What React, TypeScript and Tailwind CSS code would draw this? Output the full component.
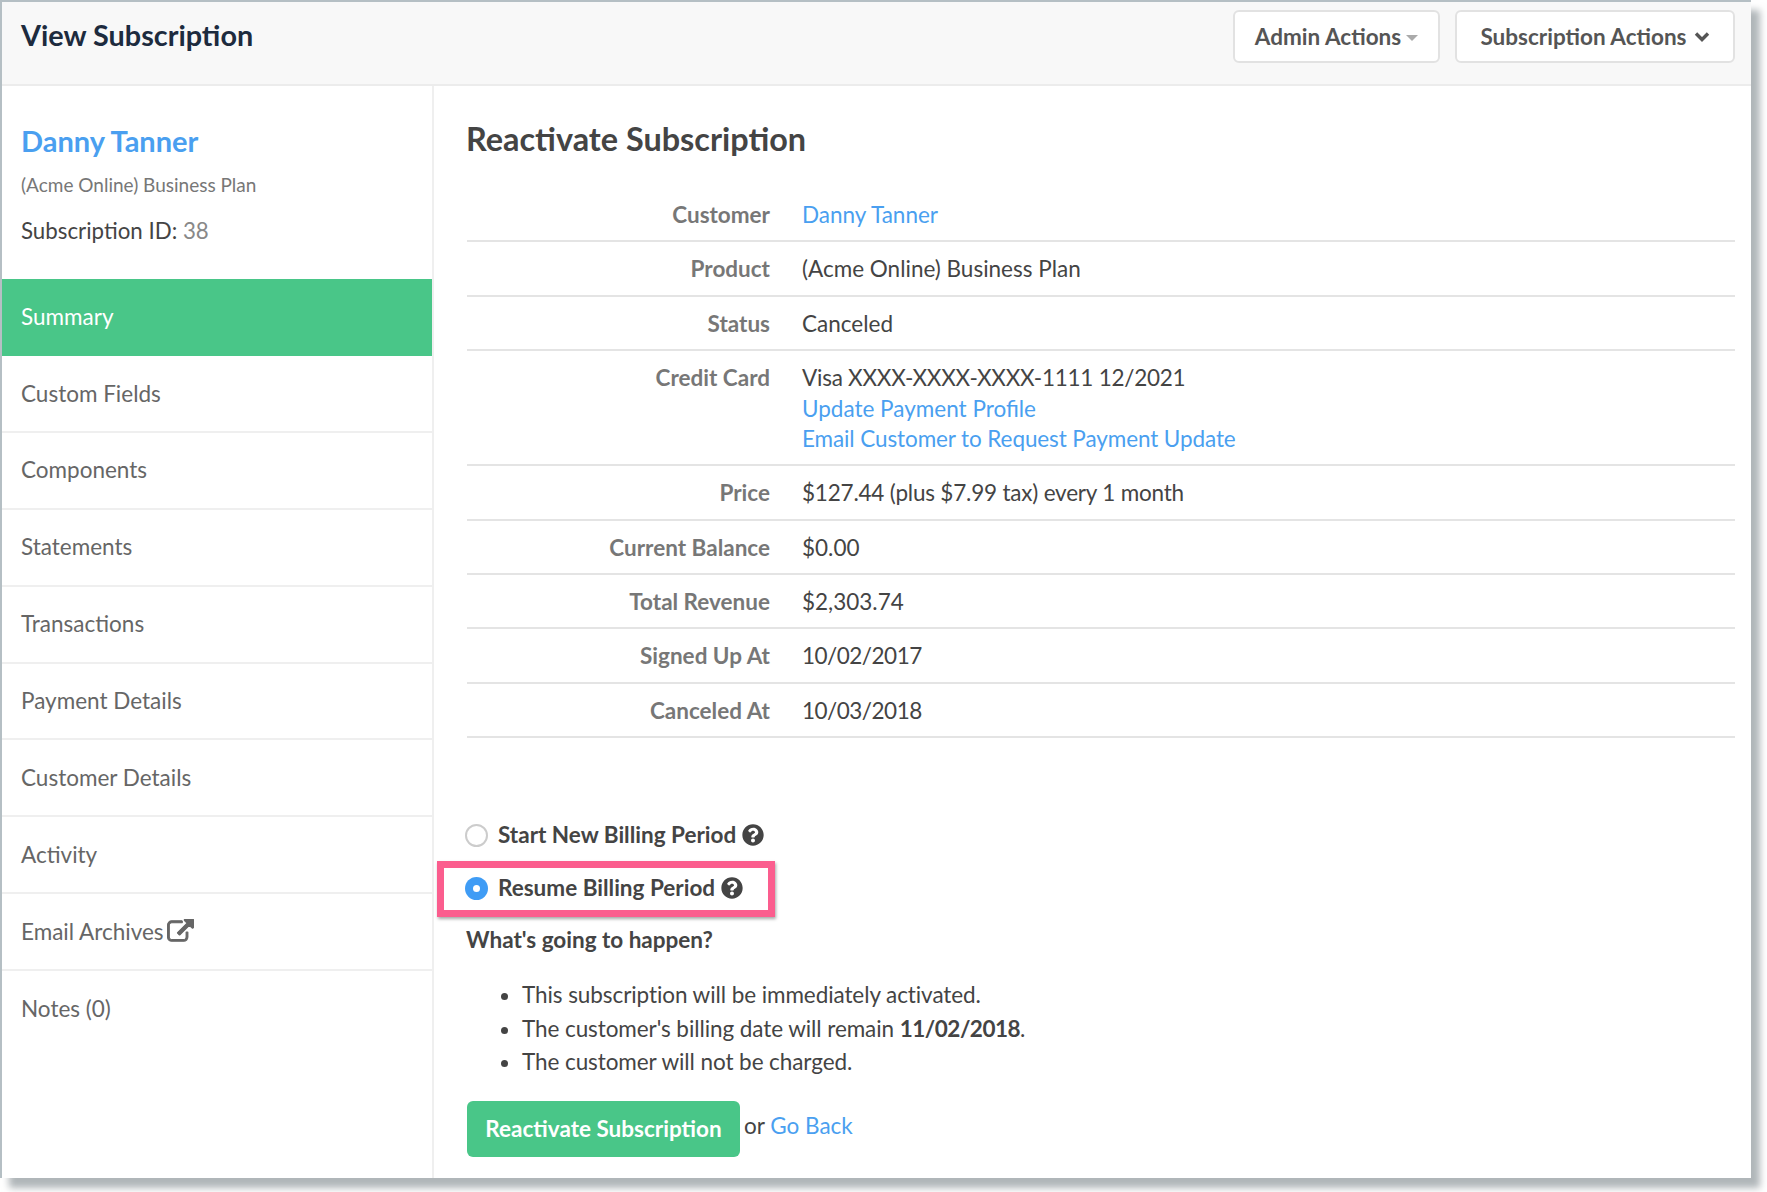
import { FaQuestionCircle } from "react-icons/fa";

const navItems = [
  "Custom Fields",
  "Components",
  "Statements",
  "Transactions",
  "Payment Details",
  "Customer Details",
  "Activity",
];

const Row = ({ label, children, tall }: { label: string; children: React.ReactNode; tall?: boolean }) => {
  return (
    <div className={`flex border-b-2 border-[#e4e4e4] ${tall ? "h-[115px]" : "h-[54.4px]"}`}>
      <div className="w-[303px] pt-[12px] text-right font-bold text-[#777777] leading-[30.5px]">{label}</div>
      <div className="pl-[32px] pt-[12px] text-[#444444] leading-[30.5px]">{children}</div>
    </div>
  );
};

const Link = ({ children }: { children: React.ReactNode }) => (
  <a className="text-[#4a9ff0]">{children}</a>
);

const ExternalIcon = () => (
  <svg viewBox="0 0 1792 1792" className="inline-block w-[27px] h-[26px] ml-[3px]" fill="#666666" stroke="#666666" strokeWidth="70">
    <path d="M1408 928v320q0 119-84.5 203.5t-203.5 84.5h-832q-119 0-203.5-84.5t-84.5-203.5v-832q0-119 84.5-203.5t203.5-84.5h704q14 0 23 9t9 23v64q0 14-9 23t-23 9h-704q-66 0-113 47t-47 113v832q0 66 47 113t113 47h832q66 0 113-47t47-113v-320q0-14 9-23t23-9h64q14 0 23 9t9 23zm384-864v512q0 26-19 45t-45 19-45-19l-176-176-652 652q-10 10-23 10t-23-10l-114-114q-10-10-10-23t10-23l652-652-176-176q-19-19-19-45t19-45 45-19h512q26 0 45 19t19 45z" />
  </svg>
);

export default function App() {
  return (
    <div className="w-[1767px] h-[1192px] bg-white font-['Lato',sans-serif] text-[22.5px] overflow-hidden">
      <div className="relative w-[1751px] h-[1178px] border-l-2 border-t-2 border-[#b5bfc4] bg-white shadow-[9px_10px_7px_rgba(150,158,162,0.75)] flex flex-col">
        <div className="h-[84px] shrink-0 bg-[#f8f8f8] border-b-2 border-[#ececec] flex justify-between pl-[19px] pr-[16px]">
          <h1 className="text-[28.8px] font-bold text-[#1d2b3e] pt-[13px] leading-[40px]">View Subscription</h1>
          <div className="flex gap-[15px] pt-[8px]">
            <button className="h-[53px] w-[207px] bg-white border-2 border-[#e2e2e2] rounded-[6px] text-[#555555] font-bold flex items-center justify-center">
              Admin Actions
              <span className="ml-[5px] mt-[3px] w-0 h-0 border-x-[6px] border-t-[6px] border-x-transparent border-t-[#aaaaaa]" />
            </button>
            <button className="h-[53px] w-[280px] bg-white border-2 border-[#e2e2e2] rounded-[6px] text-[#555555] font-bold flex items-center justify-center">
              Subscription Actions
              <svg viewBox="0 0 16 12" className="ml-[7px] w-[16px] h-[12px]" fill="none" stroke="#555555" strokeWidth="3.4">
                <path d="M2 2.5 L8 8.5 L14 2.5" />
              </svg>
            </button>
          </div>
        </div>
        <div className="flex flex-1">
          <div className="w-[432px] shrink-0 border-r-2 border-[#efefef]">
            <div className="h-[193px] pl-[19px] pt-[35px]">
              <div className="text-[29px] font-bold text-[#4a9ff0] leading-[40px]">Danny Tanner</div>
              <div className="text-[19px] text-[#777777] mt-[10px]">(Acme Online) Business Plan</div>
              <div className="mt-[14px] text-[#444444] text-[22.3px]">
                Subscription ID: <span className="text-[#888888]">38</span>
              </div>
            </div>
            <div className="h-[77px] bg-[#49c688] text-white pl-[19px] pb-[2px] flex items-center">Summary</div>
            {navItems.map((item) => (
              <div key={item} className="h-[76.9px] border-b-2 border-[#efefef] text-[#666666] pl-[19px] flex items-center">
                {item}
              </div>
            ))}
            <div className="h-[76.9px] border-b-2 border-[#efefef] text-[#666666] pl-[19px] flex items-center">
              Email Archives
              <ExternalIcon />
            </div>
            <div className="h-[76.9px] text-[#666666] pl-[19px] pb-[2px] flex items-center">Notes (0)</div>
          </div>
          <div className="flex-1 pl-[33px] pr-[16px] pt-[32px] text-[#444444]">
            <h2 className="text-[32.4px] font-bold text-[#444444] leading-[42px] ml-[-1px]">Reactivate Subscription</h2>
            <div className="mt-[28px]">
              <Row label="Customer"><Link>Danny Tanner</Link></Row>
              <Row label="Product">(Acme Online) Business Plan</Row>
              <Row label="Status">Canceled</Row>
              <Row label="Credit Card" tall>
                <span className="tracking-[-0.25px]">Visa XXXX-XXXX-XXXX-1111 12/2021</span>
                <br />
                <Link>Update Payment Profile</Link>
                <br />
                <span className="tracking-[-0.1px]"><Link>Email Customer to Request Payment Update</Link></span>
              </Row>
              <Row label="Price"><span className="tracking-[-0.2px]">$127.44 (plus $7.99 tax) every 1 month</span></Row>
              <Row label="Current Balance">$0.00</Row>
              <Row label="Total Revenue">$2,303.74</Row>
              <Row label="Signed Up At"><span className="tracking-[-0.5px]">10/02/2017</span></Row>
              <Row label="Canceled At"><span className="tracking-[-0.5px]">10/03/2018</span></Row>
            </div>
            <div className="mt-[82px] flex items-center h-[30px] font-bold">
              <span className="w-[23px] h-[23px] rounded-full border-2 border-[#cccccc] mr-[10px] ml-[-2px]" />
              Start New Billing Period
              <FaQuestionCircle className="ml-[6px] text-[22px] text-[#444444]" />
            </div>
            <div className="relative mt-[23px] flex items-center h-[30px] font-bold">
              <span className="w-[23px] h-[23px] rounded-full bg-[#3f9cf5] mr-[10px] ml-[-2px] flex items-center justify-center">
                <span className="w-[7px] h-[7px] rounded-full bg-white" />
              </span>
              Resume Billing Period
              <FaQuestionCircle className="ml-[6px] text-[22px] text-[#444444]" />
              <div className="absolute left-[-30px] top-[-12px] w-[338px] h-[56px] border-[7px] border-[#fb5d8e] shadow-[1px_2px_3px_rgba(0,0,0,0.35)]" />
            </div>
            <div className="mt-[20px] font-bold ml-[-1px]">What's going to happen?</div>
            <ul className="list-disc mt-[21px] pl-[55px] leading-[33.8px] tracking-[-0.08px]">
              <li>This subscription will be immediately activated.</li>
              <li>
                The customer's billing date will remain <b className="tracking-[-0.5px]">11/02/2018</b>.
              </li>
              <li>The customer will not be charged.</li>
            </ul>
            <div className="mt-[22px] flex items-center">
              <button className="w-[273px] h-[56px] bg-[#49c688] rounded-[6px] text-white font-bold">Reactivate Subscription</button>
              <span className="ml-[4px] mt-[-6px]">or <Link>Go Back</Link></span>
            </div>
          </div>
        </div>
      </div>
    </div>
  );
}
